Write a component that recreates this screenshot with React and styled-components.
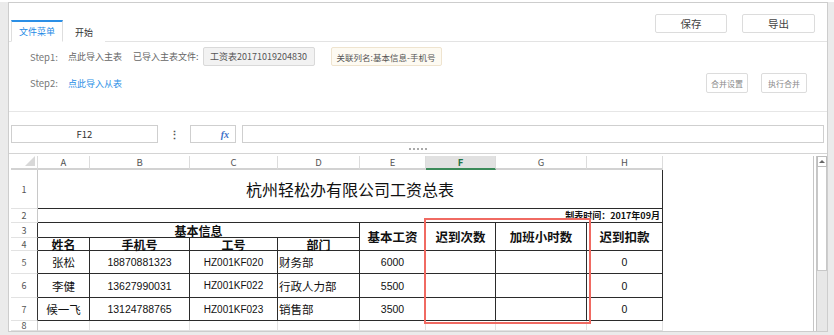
import React from 'react'
import styled, { createGlobalStyle } from 'styled-components'

const GlobalStyle = createGlobalStyle`
  html, body { margin: 0; padding: 0; }
  body { font-family: "Noto Sans CJK SC", "Noto Sans", sans-serif; color: #333; }
`

const Page = styled.div`
  width: 834px;
  height: 335px;
  box-sizing: border-box;
  padding: 2px 6px 3px 8px;
  background: linear-gradient(#fff 2px, #ebebeb 2px);`;
const Panel = styled.div`
  height: 100%;
  box-sizing: border-box;
  border: 1px solid #cdcdcd;
  background: #fff;
  display: flex;
  flex-direction: column;
  overflow: hidden;`;

/* top bar: tabs + save / export */
const TopBar = styled.div`
  height: 39px;
  flex-shrink: 0;
  box-sizing: border-box;
  border-bottom: 1px solid #e3e3e3;
  display: flex;
  justify-content: space-between;
  padding: 0 12px 0 2px;`;
const Tabs = styled.div`
  display: flex;
  align-items: flex-end;`;
const Tab = styled.div`
  height: ${p => p.active ? 22 : 21}px;
  box-sizing: border-box;
  margin-bottom: -1px;
  padding: 0 ${p => p.active ? 7 : 11}px;
  display: flex;
  align-items: center;
  font-size: 9px;
  color: ${p => p.active ? '#1d8ae6' : '#333'};
  background: #fff;
  border-top: 2px solid ${p => p.active ? '#2b8fe6' : 'transparent'};
  border-left: 1px solid ${p => p.active ? '#dedede' : 'transparent'};
  border-right: 1px solid ${p => p.active ? '#dedede' : 'transparent'};
  border-bottom: 1px solid #fff;`;
const TopButtons = styled.div`
  display: flex;
  gap: 15px;
  margin-top: 11px;
  align-self: flex-start;`;
const Button = styled.button`
  width: ${p => p.w}px;
  height: ${p => p.h}px;
  padding: 0;
  box-sizing: border-box;
  border: 1px solid #dcdcdc;
  border-radius: 2px;
  background: #fff;
  color: ${p => p.muted ? '#8a8a8a' : '#444'};
  font-family: inherit;
  font-size: ${p => p.muted ? 8 : 10.5}px;`;

/* step rows */
const Steps = styled.div`
  height: 70px;
  flex-shrink: 0;
  box-sizing: border-box;
  border-bottom: 1px solid #e6e6e6;
  padding: 5px 20px 0 21px;
  display: flex;
  flex-direction: column;
  gap: 7px;`;
const StepRow = styled.div`
  display: flex;
  align-items: center;
  height: ${p => p.h}px;
  font-size: 9px;
  color: #666;`;
const StepLabel = styled.span`
  width: 38px;
  color: #777;
  font-size: 9.5px;`;
const Link = styled.span`
  color: ${p => p.blue ? '#2b8fe6' : '#666'};
  margin-right: ${p => p.mr || 0}px;`;
const Chip = styled.span`
  height: 19px;
  width: ${p => p.w}px;
  box-sizing: border-box;
  display: flex;
  align-items: center;
  justify-content: center;
  border-radius: 2px;
  border: 1px solid ${p => p.warm ? '#efe4cf' : '#d9d9d9'};
  background: ${p => p.warm ? '#fdfaf2' : '#f2f2f2'};
  color: #555;
  margin-left: ${p => p.ml}px;
  font-size: ${p => p.warm ? 8.5 : 9}px;`;
const Spacer = styled.div`flex: 1;`;
const RowButtons = styled.div`
  display: flex;
  gap: 13px;`;

/* formula bar */
const FormulaBar = styled.div`
  height: 42px;
  flex-shrink: 0;
  box-sizing: border-box;
  border-bottom: 1px solid #d4d4d4;
  padding: 13px 3px 0 2px;
  display: flex;
  flex-direction: column;`;
const FormulaRow = styled.div`
  display: flex;
  height: 18px;`;
const Field = styled.div`
  height: 18px;
  box-sizing: border-box;
  border: 1px solid #cfcfcf;
  width: ${p => p.w ? p.w + 'px' : 'auto'};
  flex: ${p => p.w ? 'none' : 1};
  margin-left: ${p => p.ml || 0}px;
  display: flex;
  align-items: center;
  justify-content: ${p => p.right ? 'flex-end' : 'center'};
  padding-right: ${p => p.right ? 6 : 0}px;
  font-size: 9.5px;
  color: #333;`;
const Dots = styled.div`
  width: 32px;
  text-align: center;
  font-size: 11px;
  font-weight: bold;
  color: #555;
  line-height: 18px;`;
const Fx = styled.span`
  font-family: "Liberation Serif", serif;
  font-style: italic;
  font-weight: bold;
  font-size: 10px;
  color: #3a6fc8;`;
const Splitter = styled.div`
  width: 18px;
  margin: 5px auto 0;
  border-top: 2px dotted #aaa;`;

/* sheet */
const Sheet = styled.div`
  flex: 1;
  min-height: 0;
  overflow: hidden;
  display: flex;
  justify-content: space-between;
  padding: 2px 0 0 2px;`;
const Grid = styled.div`
  position: relative;
  align-self: flex-start;
  display: grid;
  grid-template-columns: 27px 52px 100px 88px 82px 66px 70px 91px 76px;
  grid-template-rows: 14px 39px 14px 15px 13px 23px 24px 23px 10px;`;
const Corner = styled.div`
  position: relative;
  border-right: 1px solid #dcdcdc;
  border-bottom: 2px solid #d2d2d2;
  &::after {
    content: '';
    position: absolute;
    right: 2px;
    bottom: 2px;
    border-left: 10px solid transparent;
    border-bottom: 10px solid #d8d8d8;
  }`;
const ColHead = styled.div`
  box-sizing: border-box;
  display: flex;
  align-items: center;
  justify-content: center;
  font-size: 9.5px;
  color: ${p => p.active ? '#217346' : '#555'};
  font-weight: ${p => p.active ? 'bold' : 'normal'};
  background: ${p => p.active ? '#e1e1e1' : '#fff'};
  border-right: 1px solid #dcdcdc;
  border-bottom: 2px solid ${p => p.active ? '#3c8a5a' : '#d2d2d2'};`;
const RowHead = styled.div`
  box-sizing: border-box;
  display: flex;
  align-items: center;
  justify-content: center;
  font-size: 9px;
  line-height: 1;
  color: #555;
  border-right: 1px solid ${p => p.dark ? '#333' : '#c8c8c8'};
  border-bottom: 1px solid #e2e2e2;`;
const Cell = styled.div`
  box-sizing: border-box;
  grid-column: span ${p => p.span || 1};
  grid-row: span ${p => p.rows || 1};
  display: flex;
  align-items: center;
  justify-content: ${p => p.align || 'center'};
  padding: 0 ${p => p.pad || 0}px;
  font-size: ${p => p.size || 11.5}px;
  font-weight: ${p => p.bold ? 'bold' : 'normal'};
  font-family: ${p => p.num ? '"Liberation Sans", "Noto Sans CJK SC", sans-serif' : 'inherit'};
  color: #111;
  white-space: nowrap;
  border-right: 1px solid ${p => p.dark ? '#2b2b2b' : '#e2e2e2'};
  border-bottom: 1px solid ${p => p.dark ? '#2b2b2b' : '#e2e2e2'};`;
const Mark = styled.div`
  position: absolute;
  left: 413px;
  top: 62px;
  width: 167px;
  height: 106px;
  box-sizing: border-box;
  border: 2px solid #f06a62;
  pointer-events: none;`;
const ScrollBar = styled.div`
  width: 14px;
  box-sizing: border-box;
  border-left: 1px solid #c6c6c6;
  padding-left: 2px;
  display: flex;`;
const Track = styled.div`
  flex: 1;
  background: #e7e7e7;
  border-left: 1px solid #c6c6c6;
  display: flex;
  flex-direction: column;`;
const UpBtn = styled.div`
  height: 11px;
  box-sizing: border-box;
  background: #fff;
  border: 1px solid #bdbdbd;
  display: flex;
  align-items: center;
  justify-content: center;
  &::after {
    content: '';
    border-left: 3px solid transparent;
    border-right: 3px solid transparent;
    border-bottom: 3px solid #666;
  }`;
const Thumb = styled.div`
  height: 104px;
  box-sizing: border-box;
  background: #fff;
  border: 1px solid #c8c8c8;
  border-top: none;`;

const cols = ['A', 'B', 'C', 'D', 'E', 'F', 'G', 'H'];
const people = [
  { name: '张松', phone: '18870881323', id: 'HZ001KF020', dept: '财务部', pay: '6000' },
  { name: '李健', phone: '13627990031', id: 'HZ001KF022', dept: '行政人力部', pay: '5500' },
  { name: '候一飞', phone: '13124788765', id: 'HZ001KF023', dept: '销售部', pay: '3500' },
];

const App = () => (
  <Page>
    <GlobalStyle />
    <Panel>
      <TopBar>
        <Tabs>
          <Tab active>文件菜单</Tab>
          <Tab>开始</Tab>
        </Tabs>
        <TopButtons>
          <Button w={72} h={19}>保存</Button>
          <Button w={73} h={19}>导出</Button>
        </TopButtons>
      </TopBar>

      <Steps>
        <StepRow h={19}>
          <StepLabel>Step1:</StepLabel>
          <Link mr={11}>点此导入主表</Link>
          <Link>已导入主表文件:</Link>
          <Chip w={112} ml={4}>工资表20171019204830</Chip>
          <Chip w={111} ml={16} warm>关联列名:基本信息-手机号</Chip>
        </StepRow>
        <StepRow h={20}>
          <StepLabel>Step2:</StepLabel>
          <Link blue>点此导入从表</Link>
          <Spacer />
          <RowButtons>
            <Button w={42} h={20} muted>合并设置</Button>
            <Button w={46} h={20} muted>执行合并</Button>
          </RowButtons>
        </StepRow>
      </Steps>

      <FormulaBar>
        <FormulaRow>
          <Field w={147}>F12</Field>
          <Dots>⋮</Dots>
          <Field w={46} right><Fx>fx</Fx></Field>
          <Field ml={6} />
        </FormulaRow>
        <Splitter />
      </FormulaBar>

      <Sheet>
        <Grid>
          <Corner />
          {cols.map(c => <ColHead key={c} active={c === 'F'}>{c}</ColHead>)}

          <RowHead>1</RowHead>
          <Cell span={8} dark size={16}>杭州轻松办有限公司工资总表</Cell>

          <RowHead>2</RowHead>
          <Cell span={8} dark size={9} bold align="flex-end" pad={2}>制表时间：2017年09月</Cell>

          <RowHead dark>3</RowHead>
          <Cell span={4} dark bold size={12}>基本信息</Cell>
          <Cell rows={2} dark bold size={12.5}>基本工资</Cell>
          <Cell rows={2} dark bold size={12.5}>迟到次数</Cell>
          <Cell rows={2} dark bold size={12.5}>加班小时数</Cell>
          <Cell rows={2} dark bold size={12.5}>迟到扣款</Cell>

          <RowHead dark>4</RowHead>
          <Cell dark bold size={12}>姓名</Cell>
          <Cell dark bold size={12}>手机号</Cell>
          <Cell dark bold size={12}>工号</Cell>
          <Cell dark bold size={12}>部门</Cell>

          {people.map((p, i) => (
            <React.Fragment key={p.id}>
              <RowHead dark>{i + 5}</RowHead>
              <Cell dark>{p.name}</Cell>
              <Cell dark num size={10.5}>{p.phone}</Cell>
              <Cell dark num size={10}>{p.id}</Cell>
              <Cell dark align="flex-start" pad={1}>{p.dept}</Cell>
              <Cell dark num size={10.5}>{p.pay}</Cell>
              <Cell dark />
              <Cell dark />
              <Cell dark num size={10.5}>0</Cell>
            </React.Fragment>
          ))}

          <RowHead>8</RowHead>
          {cols.map(c => <Cell key={c} />)}

          <Mark />
        </Grid>
        <ScrollBar>
          <Track>
            <UpBtn />
            <Thumb />
          </Track>
        </ScrollBar>
      </Sheet>
    </Panel>
  </Page>
)

export default App
